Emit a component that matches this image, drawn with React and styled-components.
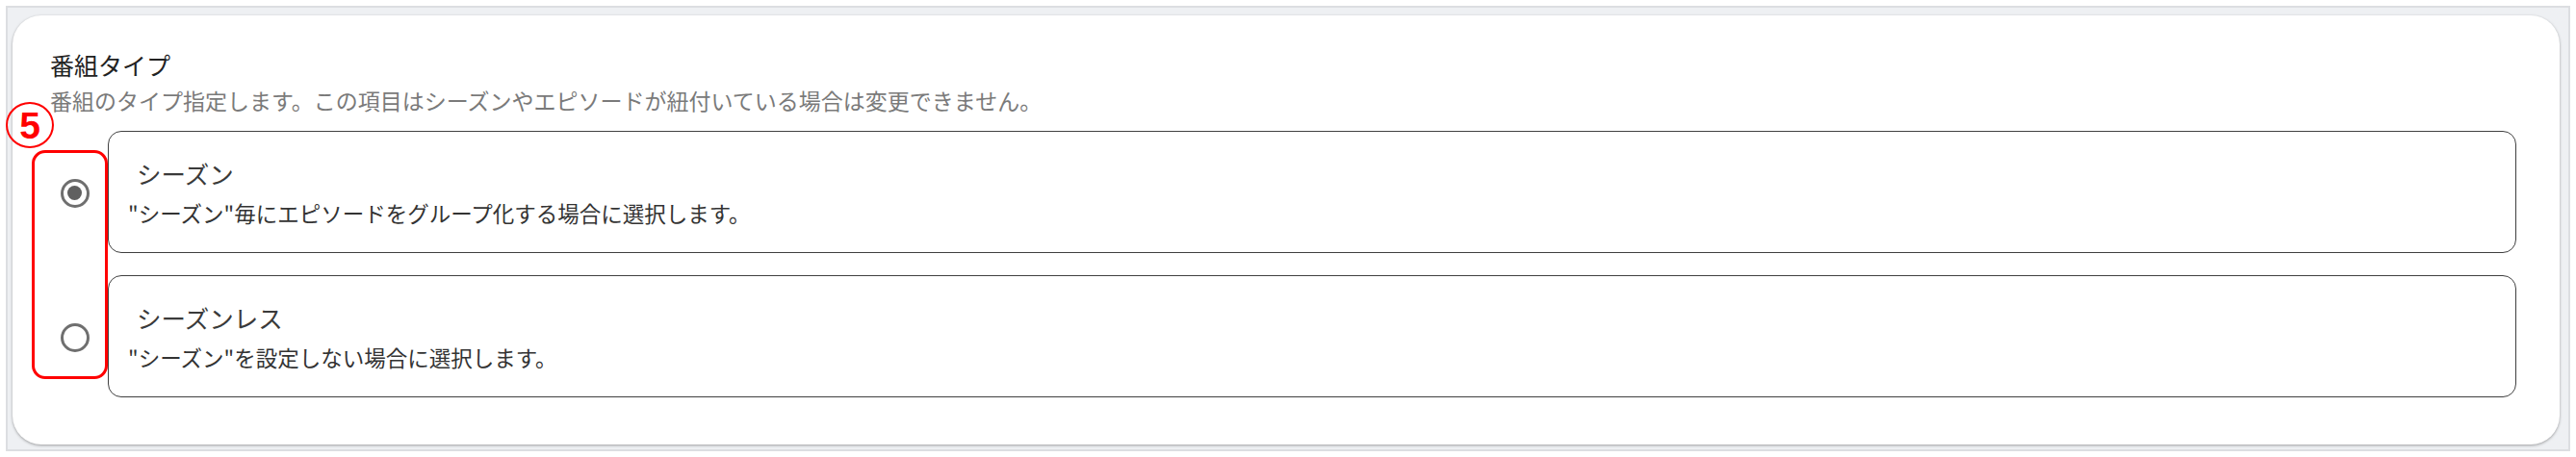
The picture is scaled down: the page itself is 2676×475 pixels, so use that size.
import React from 'react';
import styled, { createGlobalStyle } from 'styled-components';

const Global = createGlobalStyle`
  html, body {
    margin: 0;
    padding: 0;
    background: #fff;
  }
  body {
    font-family: "Noto Sans CJK JP", "Noto Sans", sans-serif;
  }
`;

const Frame = styled.div`
  margin: 6px;
  border: 2px solid #dcdee1;
  background: #eef0f3;
  padding: 8px 9px 5px 5px;
`;

const Card = styled.section`
  position: relative;
  background: #fff;
  border-radius: 30px;
  box-shadow: 0 1px 3px rgba(0, 0, 0, 0.35);
  padding: 33px 45px 49px 20px;
`;

// red annotation marker
const Badge = styled.span`
  position: absolute;
  left: -7px;
  top: 90px;
  width: 46px;
  height: 44px;
  border: 2px solid #ff0000;
  border-radius: 50%;
  color: #ff0000;
  font-family: "Liberation Sans", Arial, sans-serif;
  font-weight: 700;
  font-size: 39px;
  line-height: 45px;
  text-align: center;
`;

const Heading = styled.h2`
  margin: 0 0 3px 19px;
  font-size: 25px;
  line-height: 36px;
  font-weight: 400;
  color: #222;
`;

const Hint = styled.p`
  margin: 0 0 16px 19px;
  font-size: 23px;
  line-height: 32px;
  color: #7a7a7a;
`;

const Options = styled.div`
  display: flex;
  align-items: center;
  gap: 0;
`;

const RadioGroup = styled.div`
  width: 63px;
  border: 3px solid #ff0000;
  border-radius: 14px;
  display: flex;
  flex-direction: column;
  align-items: center;
  gap: 120px;
  padding: 27px 0 25px 10px;
  box-sizing: content-box;
`;

const Radio = styled.span`
  width: 30px;
  height: 30px;
  box-sizing: border-box;
  border: 3px solid #6f6f6f;
  border-radius: 50%;
  display: flex;
  align-items: center;
  justify-content: center;

  &::after {
    content: "";
    width: 15px;
    height: 15px;
    border-radius: 50%;
    background: ${p => (p.$checked ? '#606060' : 'transparent')};
  }
`;

const OptionList = styled.div`
  flex: 1;
  display: flex;
  flex-direction: column;
  gap: 23px;
`;

const OptionCard = styled.label`
  display: block;
  border: 1.5px solid #404040;
  border-radius: 14px;
  padding: 25px 20px 25px 20px;
`;

const OptionTitle = styled.div`
  padding-left: 9px;
  font-size: 25.5px;
  line-height: 36px;
  color: #3a3a3a;
  margin-bottom: 7px;
`;

const OptionDesc = styled.div`
  font-size: 22.5px;
  line-height: 32px;
  color: #333;
`;

const options = [
  {
    title: 'シーズン',
    desc: '"シーズン"毎にエピソードをグループ化する場合に選択します。',
    checked: true,
  },
  {
    title: 'シーズンレス',
    desc: '"シーズン"を設定しない場合に選択します。',
    checked: false,
  },
];

export default function App() {
  return (
    <>
      <Global />
      <Frame>
        <Card>
          <Badge>5</Badge>
          <Heading>番組タイプ</Heading>
          <Hint>番組のタイプ指定します。この項目はシーズンやエピソードが紐付いている場合は変更できません。</Hint>
          <Options>
            <RadioGroup>
              {options.map(o => (
                <Radio key={o.title} $checked={o.checked} />
              ))}
            </RadioGroup>
            <OptionList>
              {options.map(o => (
                <OptionCard key={o.title}>
                  <OptionTitle>{o.title}</OptionTitle>
                  <OptionDesc>{o.desc}</OptionDesc>
                </OptionCard>
              ))}
            </OptionList>
          </Options>
        </Card>
      </Frame>
    </>
  );
}
